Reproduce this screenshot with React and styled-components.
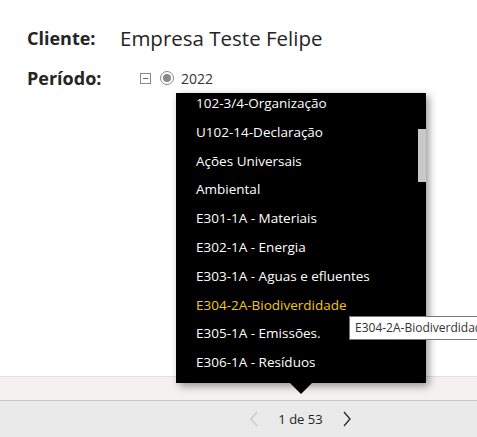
import styled, { createGlobalStyle } from "styled-components";

const GlobalStyle = createGlobalStyle`
  html, body {
    margin: 0;
    padding: 0;
    background: #ffffff;
  }
  body {
    font-family: "Open Sans", "Noto Sans", sans-serif;
    color: #252423;
  }
`;

const Page = styled.div`
  position: relative;
  width: 477px;
  height: 437px;
  overflow: hidden;
  display: flex;
  flex-direction: column;
`;

const Content = styled.div`
  flex: 1;
  padding: 22px 0 0 27px;
  display: flex;
  flex-direction: column;
  gap: 12px;
`;

const Row = styled.div`
  display: flex;
  align-items: center;
  height: ${(p) => p.h}px;
`;

const Label = styled.span`
  width: 93px;
  font-size: 18px;
  font-weight: 700;
  color: #252423;
`;

const Value = styled.span`
  font-size: 20.5px;
  color: #252423;
`;

const Tree = styled.div`
  display: flex;
  align-items: center;
  margin-left: 20px;
  gap: 9px;
  font-size: 14px;
  color: #333;
`;

const Radio = styled.span`
  width: 12px;
  height: 12px;
  border: 1px solid #8a8a8a;
  border-radius: 50%;
  display: flex;
  align-items: center;
  justify-content: center;
  margin-right: -2px;
  &::after {
    content: "";
    width: 8px;
    height: 8px;
    border-radius: 50%;
    background: #8a8a8a;
  }
`;

const TopBand = styled.div`
  height: 23px;
  background: #f3f2f1;
  border-top: 1px solid #e1dfdd;
  border-bottom: 1px solid #c8c6c4;
`;

const Pager = styled.div`
  height: 36px;
  background: #eaeaea;
  display: flex;
  align-items: center;
  justify-content: center;
  gap: 19px;
  padding-left: 124px;
  font-size: 13px;
  color: #252423;
`;

const Popup = styled.div`
  position: absolute;
  left: 176px;
  top: 93px;
  width: 250px;
  height: 290px;
  background: #000;
  box-shadow: 3px 3px 8px rgba(0, 0, 0, 0.4);
  &::after {
    content: "";
    position: absolute;
    left: 114px;
    bottom: -11px;
    border-left: 11px solid transparent;
    border-right: 11px solid transparent;
    border-top: 11px solid #000;
  }
`;

const List = styled.div`
  height: 100%;
  overflow: hidden;
`;

const Items = styled.ul`
  list-style: none;
  margin: -4px 0 0;
  padding: 0;
`;

const Item = styled.li`
  height: 28.8px;
  line-height: 28.8px;
  padding-left: 20px;
  font-size: 13.5px;
  color: ${(p) => (p.active ? "#f2c811" : "#ffffff")};
  white-space: nowrap;
`;

const Thumb = styled.div`
  position: absolute;
  right: 0;
  top: 36px;
  width: 8px;
  height: 53px;
  background: #c8c8c8;
`;

const Tip = styled.div`
  position: absolute;
  left: 349px;
  top: 316px;
  height: 22px;
  padding: 0 5px;
  background: #fff;
  border: 1px solid #767676;
  font-size: 12px;
  line-height: 22px;
  color: #333;
  white-space: nowrap;
`;

const itens = [
  "102-3/4-Organização",
  "U102-14-Declaração",
  "Ações Universais",
  "Ambiental",
  "E301-1A - Materiais",
  "E302-1A - Energia",
  "E303-1A - Aguas e efluentes",
  "E304-2A-Biodiverdidade",
  "E305-1A - Emissões.",
  "E306-1A - Resíduos",
];

function App() {
  return (
    <Page>
      <GlobalStyle />
      <Content>
        <Row h={32}>
          <Label>Cliente:</Label>
          <Value>Empresa Teste Felipe</Value>
        </Row>
        <Row h={24}>
          <Label>Período:</Label>
          <Tree>
            <svg width="11" height="11" viewBox="0 0 11 11">
              <rect x="0.5" y="0.5" width="10" height="10" fill="#fff" stroke="#8a8a8a" />
              <line x1="3" y1="5.5" x2="8" y2="5.5" stroke="#666" />
            </svg>
            <Radio />
            <span>2022</span>
          </Tree>
        </Row>
      </Content>
      <TopBand />
      <Pager>
        <svg width="10" height="16" viewBox="0 0 10 16">
          <path d="M8 1 L2 8 L8 15" fill="none" stroke="#c8c8c8" strokeWidth="1.3" />
        </svg>
        <span>1 de 53</span>
        <svg width="10" height="16" viewBox="0 0 10 16">
          <path d="M2 1 L8 8 L2 15" fill="none" stroke="#252423" strokeWidth="1.3" />
        </svg>
      </Pager>

      <Popup>
        <List>
          <Items>
            {itens.map((x) => (
              <Item key={x} active={x === "E304-2A-Biodiverdidade"}>
                {x}
              </Item>
            ))}
          </Items>
        </List>
        <Thumb />
      </Popup>
      <Tip>E304-2A-Biodiverdidade</Tip>
    </Page>
  );
}

export default App;
